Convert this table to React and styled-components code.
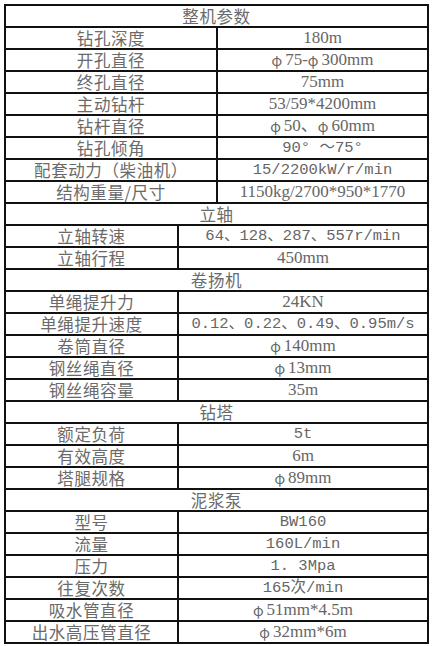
import React from "react";
import styled, { createGlobalStyle } from "styled-components";

const Global = createGlobalStyle`
  html, body { margin: 0; padding: 0; background: #fff; }
  body { font-family: "Liberation Serif", "Noto Sans CJK SC", serif; }
`;

const Page = styled.div`
  padding: 4px 0 0 4px;
`;

const Table = styled.div`
  box-sizing: border-box;
  width: 425px;
  height: 640px;
  padding: 2px;
  background: #111;
  display: grid;
  grid-template-rows: repeat(29, 1fr);
  row-gap: 2px;
`;

const Row = styled.div`
  display: grid;
  grid-template-columns: ${(p) => (p.$split ? `${p.$split}px 1fr` : "1fr")};
  column-gap: 2px;
  min-height: 0;
`;

const Cell = styled.div`
  background: #fff;
  display: flex;
  align-items: center;
  justify-content: center;
  white-space: nowrap;
  color: #666;
  font-family: ${(p) =>
    p.$mono
      ? `"Liberation Mono", "Noto Sans CJK SC", monospace`
      : `"Liberation Serif", "Noto Sans CJK SC", serif`};
  font-size: ${(p) => (p.$mono ? "15.5px" : "17px")};
  line-height: 20px;
`;

const Label = styled(Cell)`
  font-family: "Noto Sans CJK SC", sans-serif;
  font-size: 16.5px;
  letter-spacing: 0.6px;
  color: #6a6a6a;
`;

const Header = styled(Label)``;

const Phi = styled.span`
  font-family: "Noto Sans CJK SC", sans-serif;
  font-size: 14px;
  margin-right: 3px;
`;

function Value({ text }) {
  const parts = text.split("φ");
  return parts.map((p, i) => (
    <React.Fragment key={i}>
      {i > 0 && <Phi>φ</Phi>}
      {p}
    </React.Fragment>
  ));
}

const sections = [
  {
    title: "整机参数",
    split: 210,
    rows: [
      ["钻孔深度", "180m"],
      ["开孔直径", "φ75-φ300mm"],
      ["终孔直径", "75mm"],
      ["主动钻杆", "53/59*4200mm"],
      ["钻杆直径", "φ50、 φ60mm"],
      ["钻孔倾角", "90° ～75°", true],
      ["配套动力（柴油机）", "15/2200kW/r/min", true],
      ["结构重量/尺寸", "1150kg/2700*950*1770"],
    ],
  },
  {
    title: "立轴",
    split: 171,
    rows: [
      ["立轴转速", "64、128、287、557r/min", true],
      ["立轴行程", "450mm"],
    ],
  },
  {
    title: "卷扬机",
    split: 171,
    rows: [
      ["单绳提升力", "24KN"],
      ["单绳提升速度", "0.12、0.22、0.49、0.95m/s", true],
      ["卷筒直径", "φ140mm"],
      ["钢丝绳直径", "φ13mm"],
      ["钢丝绳容量", "35m"],
    ],
  },
  {
    title: "钻塔",
    split: 171,
    rows: [
      ["额定负荷", "5t", true],
      ["有效高度", "6m"],
      ["塔腿规格", "φ89mm"],
    ],
  },
  {
    title: "泥浆泵",
    split: 171,
    rows: [
      ["型号", "BW160", true],
      ["流量", "160L/min", true],
      ["压力", "1. 3Mpa", true],
      ["往复次数", "165次/min", true],
      ["吸水管直径", "φ51mm*4.5m"],
      ["出水高压管直径", "φ32mm*6m"],
    ],
  },
];

export default function App() {
  return (
    <Page>
      <Global />
      <Table>
        {sections.map((s) => (
          <React.Fragment key={s.title}>
            <Row>
              <Header>{s.title}</Header>
            </Row>
            {s.rows.map(([k, v, mono]) => (
              <Row key={k} $split={s.split}>
                <Label>{k}</Label>
                <Cell $mono={mono}>
                  <Value text={v} />
                </Cell>
              </Row>
            ))}
          </React.Fragment>
        ))}
      </Table>
    </Page>
  );
}
